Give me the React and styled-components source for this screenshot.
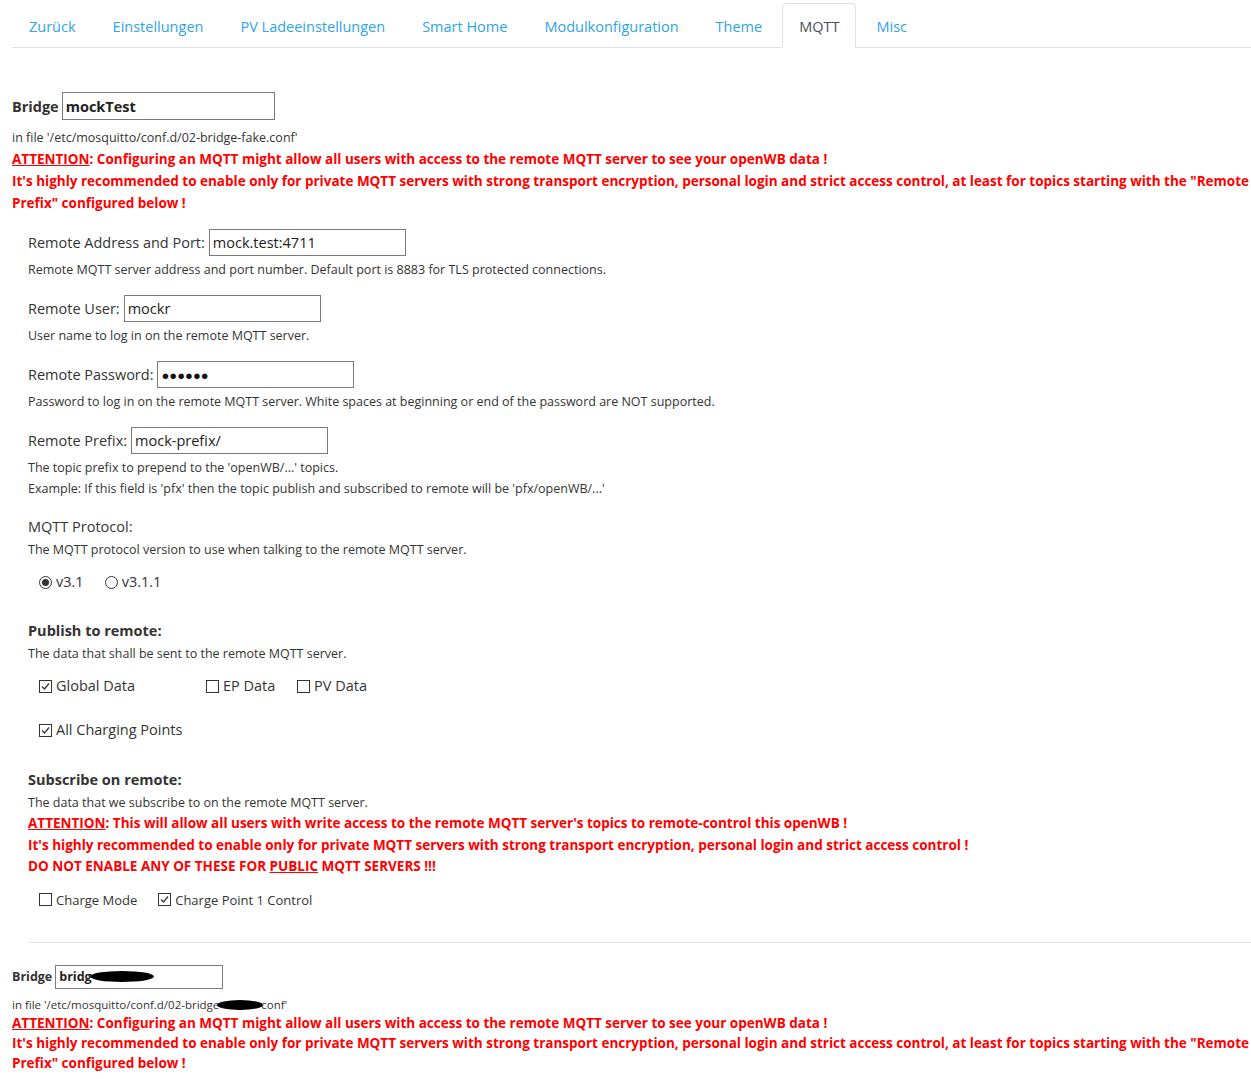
import styled, { createGlobalStyle } from 'styled-components'

const GlobalStyle = createGlobalStyle`
   body {
      margin: 0;
      background: #fff;
      font-family: 'Open Sans', 'Noto Sans', sans-serif;
      color: #333;
   }
`

const Page = styled.div`
   padding: 3px 0 0 12px;
`

const Tabs = styled.ul`
   display: flex;
   margin: 0;
   padding: 0;
   list-style: none;
   border-bottom: 1px solid #dee2e6;
`

const Tab = styled.li`
   margin-bottom: -1px;
   margin-right: 3px;
   padding: 11px 16px 8px;
   font-size: 14.5px;
   line-height: 24px;
   border: 1px solid ${(props) => (props.active ? '#dee2e6' : 'transparent')};
   border-bottom-color: ${(props) => (props.active ? '#fff' : 'transparent')};
   border-radius: 4px 4px 0 0;
   background: ${(props) => (props.active ? '#fff' : 'transparent')};
   color: ${(props) => (props.active ? '#495057' : '#2fa4e7')};
   cursor: pointer;
`

const Bridge = styled.div`
   margin-top: ${(props) => (props.compact ? '22px' : '44px')};
`

const BridgeHead = styled.div`
   display: flex;
   align-items: center;
   gap: 3px;
   font-weight: 700;
   font-size: ${(props) => (props.compact ? '12.5px' : '14.5px')};
`

const NameBox = styled.div`
   display: flex;
   align-items: center;
   box-sizing: border-box;
   width: ${(props) => (props.compact ? '168px' : '213px')};
   height: ${(props) => (props.compact ? '24px' : '28px')};
   padding: 0 3px;
   border: 1px solid #7a7a7a;
   color: #222;
`

const Redacted = styled.span`
   display: inline-block;
   width: ${(props) => props.w}px;
   height: ${(props) => props.h}px;
   margin-left: -2px;
   margin-right: -2px;
   background: #000;
   border-radius: 50%;
   vertical-align: middle;
`

const FileNote = styled.div`
   margin-top: 8px;
   font-size: ${(props) => (props.compact ? '11.5px' : '12.5px')};
   line-height: ${(props) => (props.compact ? '16px' : '20px')};
   color: #333;
`

const Warning = styled.div`
   color: #f00;
   font-weight: 700;
   font-size: 13.5px;
   line-height: ${(props) => props.lh || '22px'};

   u {
      text-decoration: underline;
   }
`

const Settings = styled.div`
   padding-left: 16px;
`

const Field = styled.div`
   margin-top: ${(props) => props.top || '15px'};
`

const FieldRow = styled.div`
   display: flex;
   align-items: center;
   gap: 4px;
   font-size: 14.5px;
   line-height: 24px;
`

const TextBox = styled.div`
   display: flex;
   align-items: center;
   box-sizing: border-box;
   width: ${(props) => props.w}px;
   height: 27px;
   padding: 0 3px;
   border: 1px solid #7a7a7a;
   font-size: 14.5px;
   color: #222;
`

const Dots = styled.span`
   font-size: 13px;
   color: #111;
`

const Help = styled.div`
   margin-top: ${(props) => props.top || '3px'};
   font-size: 12.5px;
   line-height: 21px;
   color: #333;
`

const Heading = styled.div`
   font-size: 14.5px;
   line-height: 24px;
   font-weight: ${(props) => (props.bold ? 700 : 400)};
`

const Options = styled.div`
   display: flex;
   align-items: center;
   padding-left: 11px;
   margin-top: ${(props) => props.top || '12px'};
   gap: 21px;
`

const Option = styled.label`
   display: flex;
   align-items: center;
   gap: 4px;
   min-width: ${(props) => props.minw || 0}px;
   font-size: ${(props) => (props.small ? '13px' : '14.5px')};
   line-height: 20px;
   color: #333;
`

const Radio = styled.span`
   position: relative;
   box-sizing: border-box;
   width: 13px;
   height: 13px;
   border: 1px solid #333;
   border-radius: 50%;
   background: #fff;

   &::after {
      content: '';
      display: ${(props) => (props.checked ? 'block' : 'none')};
      position: absolute;
      left: 2px;
      top: 2px;
      width: 7px;
      height: 7px;
      border-radius: 50%;
      background: #333;
   }
`

const Box = styled.span`
   display: flex;
   align-items: center;
   justify-content: center;
   box-sizing: border-box;
   width: 13px;
   height: 13px;
   border: 1px solid #333;
   background: #fff;
`

const Divider = styled.hr`
   margin: 32px 0 0 16px;
   border: 0;
   border-top: 1px solid #e5e5e5;
`

const Check = ({ checked }) => (
   <Box>
      {checked && (
         <svg width="9" height="9" viewBox="0 0 9 9">
            <path d="M1 4.5 L3.5 7 L8 1.5" fill="none" stroke="#333" strokeWidth="1.2" />
         </svg>
      )}
   </Box>
)

const WarnConfig = ({ lh }) => (
   <>
      <Warning lh={lh}>
         <u>ATTENTION</u>: Configuring an MQTT might allow all users with access to the remote MQTT server to see your openWB data !
      </Warning>
      <Warning lh={lh}>
         It's highly recommended to enable only for private MQTT servers with strong transport encryption, personal login and strict access control, at least for topics starting with the "Remote Prefix" configured below !
      </Warning>
   </>
)

const tabs = ['Zurück', 'Einstellungen', 'PV Ladeeinstellungen', 'Smart Home', 'Modulkonfiguration', 'Theme', 'MQTT', 'Misc']

function App() {
   return (
      <Page>
         <GlobalStyle />
         <Tabs>
            {tabs.map((t) => (
               <Tab key={t} active={t === 'MQTT'}>
                  {t}
               </Tab>
            ))}
         </Tabs>

         <Bridge>
            <BridgeHead>
               Bridge <NameBox>mockTest</NameBox>
            </BridgeHead>
            <FileNote>in file '/etc/mosquitto/conf.d/02-bridge-fake.conf'</FileNote>
            <WarnConfig />

            <Settings>
               <Field>
                  <FieldRow>
                     Remote Address and Port: <TextBox w={197}>mock.test:4711</TextBox>
                  </FieldRow>
                  <Help>Remote MQTT server address and port number. Default port is 8883 for TLS protected connections.</Help>
               </Field>
               <Field>
                  <FieldRow>
                     Remote User: <TextBox w={197}>mockr</TextBox>
                  </FieldRow>
                  <Help>User name to log in on the remote MQTT server.</Help>
               </Field>
               <Field>
                  <FieldRow>
                     Remote Password:{' '}
                     <TextBox w={197}>
                        <Dots>●●●●●●</Dots>
                     </TextBox>
                  </FieldRow>
                  <Help>Password to log in on the remote MQTT server. White spaces at beginning or end of the password are NOT supported.</Help>
               </Field>
               <Field>
                  <FieldRow>
                     Remote Prefix: <TextBox w={197}>mock-prefix/</TextBox>
                  </FieldRow>
                  <Help>
                     The topic prefix to prepend to the 'openWB/...' topics.
                     <br />
                     Example: If this field is 'pfx' then the topic publish and subscribed to remote will be 'pfx/openWB/...'
                  </Help>
               </Field>

               <Field top="16px">
                  <Heading>MQTT Protocol:</Heading>
                  <Help top="0">The MQTT protocol version to use when talking to the remote MQTT server.</Help>
                  <Options>
                     <Option>
                        <Radio checked /> v3.1
                     </Option>
                     <Option>
                        <Radio /> v3.1.1
                     </Option>
                  </Options>
               </Field>

               <Field top="27px">
                  <Heading bold>Publish to remote:</Heading>
                  <Help top="0">The data that shall be sent to the remote MQTT server.</Help>
                  <Options top="12px">
                     <Option minw={146}>
                        <Check checked /> Global Data
                     </Option>
                     <Option minw={70}>
                        <Check /> EP Data
                     </Option>
                     <Option>
                        <Check /> PV Data
                     </Option>
                  </Options>
                  <Options top="24px">
                     <Option>
                        <Check checked /> All Charging Points
                     </Option>
                  </Options>
               </Field>

               <Field top="28px">
                  <Heading bold>Subscribe on remote:</Heading>
                  <Help top="0">The data that we subscribe to on the remote MQTT server.</Help>
                  <Warning lh="21.5px">
                     <u>ATTENTION</u>: This will allow all users with write access to the remote MQTT server's topics to remote-control this openWB !
                  </Warning>
                  <Warning lh="21.5px">
                     It's highly recommended to enable only for private MQTT servers with strong transport encryption, personal login and strict access control !
                  </Warning>
                  <Warning lh="21.5px">
                     DO NOT ENABLE ANY OF THESE FOR <u>PUBLIC</u> MQTT SERVERS !!!
                  </Warning>
                  <Options top="12px">
                     <Option small>
                        <Check /> Charge Mode
                     </Option>
                     <Option small>
                        <Check checked /> Charge Point 1 Control
                     </Option>
                  </Options>
               </Field>
            </Settings>
            <Divider />
         </Bridge>

         <Bridge compact>
            <BridgeHead compact>
               Bridge{' '}
               <NameBox compact>
                  bridg
                  <Redacted w={64} h={11} />
               </NameBox>
            </BridgeHead>
            <FileNote compact>
               in file '/etc/mosquitto/conf.d/02-bridge
               <Redacted w={46} h={10} />
               conf'
            </FileNote>
            <WarnConfig lh="20px" />
         </Bridge>
      </Page>
   )
}

export default App
